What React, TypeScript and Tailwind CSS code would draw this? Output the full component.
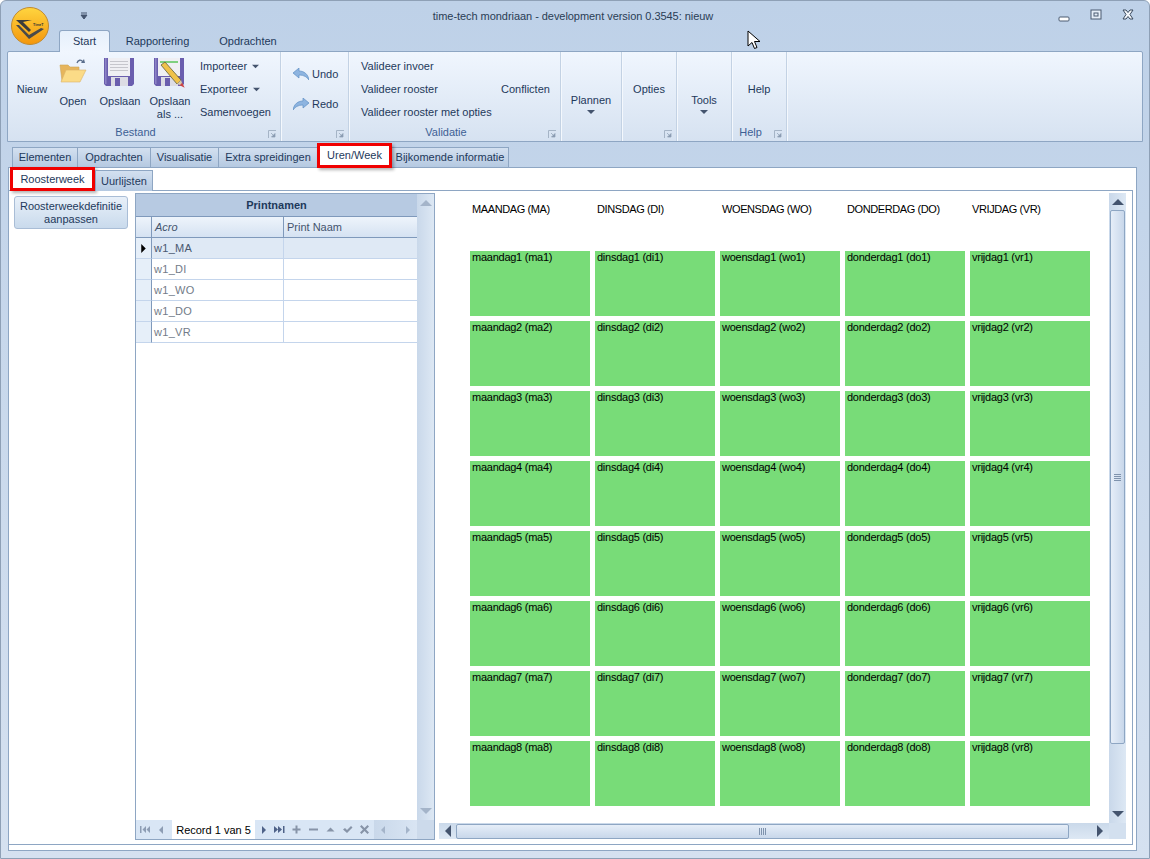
import type { ReactNode } from "react";

const font = "font-['Liberation_Sans',Arial,sans-serif]";
const days = [
  { name: "maandag", code: "ma", title: "MAANDAG (MA)" },
  { name: "dinsdag", code: "di", title: "DINSDAG (DI)" },
  { name: "woensdag", code: "wo", title: "WOENSDAG (WO)" },
  { name: "donderdag", code: "do", title: "DONDERDAG (DO)" },
  { name: "vrijdag", code: "vr", title: "VRIJDAG (VR)" },
];
const periods = [1, 2, 3, 4, 5, 6, 7, 8];
const acros = ["w1_MA", "w1_DI", "w1_WO", "w1_DO", "w1_VR"];

/* ── Icons ── */

function Logo() {
  return (
    <svg width="40" height="40" viewBox="0 0 40 40" className="absolute left-[9px] top-[5px]">
      <defs>
        <linearGradient id="orb" x1="0" y1="0" x2="0" y2="1">
          <stop offset="0" stopColor="#ffd53f" />
          <stop offset="1" stopColor="#f4960c" />
        </linearGradient>
      </defs>
      <circle cx="20" cy="20" r="18.5" fill="url(#orb)" stroke="#c08a30" strokeWidth="1" />
      <path d="M6 14h16l-9 2 8 8-2 2z" fill="#3c3c3c" />
      <path d="M6 19l13 14 15-10-3-1-12 7-10-10z" fill="#4a4a4a" />
      <text x="23" y="19.500" fontSize="3.600" fontWeight="700" fill="#333">TimeT</text>
    </svg>
  );
}

function Folder() {
  return (
    <svg width="28" height="26" viewBox="0 0 28 26">
      <path d="M18 6c1-3 4-4 6-1" stroke="#5b6f8c" strokeWidth="1.300" fill="none" />
      <path d="M22 6l4 0-1-4z" fill="#5b6f8c" />
      <path d="M1 8h8l2 2h9v14H3z" fill="#e6b55c" stroke="#cfa556" strokeWidth="0.600" />
      <path d="M7 13h20l-6 12H2z" fill="#fbdb87" stroke="#dcb468" strokeWidth="0.600" />
    </svg>
  );
}

function Floppy({ pencil }: { pencil?: boolean }) {
  return (
    <svg width="34" height="32" viewBox="0 0 34 32">
      <path d="M1 1h30v26l-2 2H3l-2-2z" fill="#6a5eae" />
      <rect x="2" y="1" width="1.500" height="26" fill="#8d83c6" />
      <rect x="5" y="1" width="22" height="18" fill="#efeff3" />
      {pencil ? (
        <path d="M7 4h18v2H7z" fill="#7fd07f" />
      ) : (
        <path d="M7 4.500h18M7 7.500h18M7 10.500h18M7 13.500h18" stroke="#c6c6cc" strokeWidth="1" />
      )}
      <rect x="8" y="20" width="17" height="9" fill="#dcdce4" />
      <rect x="12" y="21" width="5" height="8" fill="#6a5eae" />
      {pencil && (
        <>
          <path d="M8 8l4-3 16 18-4 4z" fill="#f0c24a" stroke="#5f5f3a" strokeWidth="0.800" />
          <path d="M24 27l4-4 2 6z" fill="#d8c8a8" />
          <path d="M28 28l2 1-1-2z" fill="#c44" stroke="#c44" strokeWidth="1.500" />
        </>
      )}
    </svg>
  );
}

function ArrowIcon({ flip }: { flip?: boolean }) {
  return (
    <svg width="16" height="13" viewBox="0 0 16 13" className={flip ? "-scale-x-100" : ""}>
      <path d="M0 5L6 0v3c5 0 9 3 10 9-2-3-5-5-10-5v3z" fill="#8db4e0" stroke="#5f8fc4" strokeWidth="0.700" />
    </svg>
  );
}

function Launcher() {
  return (
    <svg width="9" height="9" viewBox="0 0 9 9" className="absolute right-[3px] bottom-[2px]">
      <path d="M0.500 8V0.500H8" stroke="#a5b4c6" fill="none" />
      <path d="M3 3l3 3M7 3.500V7H3.500z" stroke="#8b9cb2" fill="#8b9cb2" strokeWidth="0.700" />
    </svg>
  );
}

function Tri({ dir, color = "#44546e", size = 8 }: { dir: "up" | "down" | "left" | "right"; color?: string; size?: number }) {
  const d = { up: "M0 6L4 2l4 4z", down: "M0 2l4 4 4-4z", left: "M6 0L2 4l4 4z", right: "M2 0l4 4-4 4z" }[dir];
  return (
    <svg width={size} height={size} viewBox="0 0 8 8" className="shrink-0">
      <path d={d} fill={color} />
    </svg>
  );
}

function NavGlyph({ d, color }: { d: string; color: string }) {
  return (
    <svg width="11" height="11" viewBox="0 0 11 11" className="shrink-0">
      <path d={d} fill={color} />
    </svg>
  );
}

function Cursor() {
  return (
    <svg width="14" height="20" viewBox="0 0 14 20" className="absolute left-[746px] top-[29px]">
      <path d="M1 1v15l4-3.500 2.500 6 2.500-1-2.500-6H13z" fill="#fff" stroke="#000" strokeWidth="1" />
    </svg>
  );
}

/* ── Ribbon ── */

function RibbonGroup({ width, label, launcher, children }: { width: string; label?: string; launcher?: boolean; children?: ReactNode }) {
  return (
    <div className={`${width} shrink-0 flex flex-col border-r border-[#c3d2e4] shadow-[1px_0_0_#f4f8fd] relative`}>
      <div className="h-[75px] flex">{children}</div>
      <div className="relative h-[15px] pr-[17px] text-center leading-[13px] text-[#3d5f95]">
        {label}
        {launcher && <Launcher />}
      </div>
    </div>
  );
}

function Stack({ children, className = "" }: { children: ReactNode; className?: string }) {
  return <div className={`flex flex-col pt-[3px] ${className}`}>{children}</div>;
}

function StackRow({ children }: { children: ReactNode }) {
  return <div className="h-[23px] flex items-center gap-[5px] whitespace-nowrap">{children}</div>;
}

function BigButton({ icon, label, width }: { icon: ReactNode; label: ReactNode; width: string }) {
  return (
    <div className={`${width} shrink-0 flex flex-col items-center text-center leading-[13px]`}>
      <div className="h-[43px] pt-[5px] flex items-start justify-center">{icon}</div>
      {label}
    </div>
  );
}

function Ribbon() {
  return (
    <div className="ml-[6px] h-[91px] w-[1136px] flex border border-[#8ea6c3] rounded-t-[2px] bg-linear-to-b from-[#f0f6fe] to-[#d6e2f1] text-[#1e395b]">
      <RibbonGroup width="w-[273px]" label="Bestand" launcher>
        <div className="w-[48px] shrink-0 flex items-center justify-center">Nieuw</div>
        <BigButton width="w-[34px]" icon={<Folder />} label="Open" />
        <BigButton width="w-[60px]" icon={<Floppy />} label="Opslaan" />
        <BigButton width="w-[40px]" icon={<Floppy pencil />} label={<span>Opslaan<br />als ...</span>} />
        <Stack className="pl-[10px]">
          <StackRow>Importeer <Tri dir="down" size={7} /></StackRow>
          <StackRow>Exporteer <Tri dir="down" size={7} /></StackRow>
          <StackRow>Samenvoegen</StackRow>
        </Stack>
      </RibbonGroup>
      <RibbonGroup width="w-[68px]" launcher>
        <div className="flex flex-col pl-[12px] pt-[15px] gap-[15px]">
          <div className="h-[15px] flex items-center gap-[3px]"><ArrowIcon />Undo</div>
          <div className="h-[15px] flex items-center gap-[3px]"><ArrowIcon flip />Redo</div>
        </div>
      </RibbonGroup>
      <RibbonGroup width="w-[212px]" label="Validatie" launcher>
        <Stack className="pl-[12px] w-[152px]">
          <StackRow>Valideer invoer</StackRow>
          <StackRow>Valideer rooster</StackRow>
          <StackRow>Valideer rooster met opties</StackRow>
        </Stack>
        <div className="flex items-center">Conflicten</div>
      </RibbonGroup>
      <RibbonGroup width="w-[61px]">
        <div className="w-full flex flex-col items-center pt-[42px] leading-[13px]">Plannen<span className="mt-[1px]"><Tri dir="down" /></span></div>
      </RibbonGroup>
      <RibbonGroup width="w-[55px]" launcher>
        <div className="w-full flex items-center justify-center">Opties</div>
      </RibbonGroup>
      <RibbonGroup width="w-[55px]">
        <div className="w-full flex flex-col items-center pt-[42px] leading-[13px]">Tools<span className="mt-[1px]"><Tri dir="down" /></span></div>
      </RibbonGroup>
      <RibbonGroup width="w-[55px]" label="Help" launcher>
        <div className="w-full flex items-center justify-center">Help</div>
      </RibbonGroup>
    </div>
  );
}

/* ── Tabs ── */

function DocTab({ label, width }: { label: string; width: string }) {
  return (
    <div className={`${width} h-[20px] shrink-0 flex items-center justify-center border border-b-0 border-[#8ea6c3] -ml-px first:ml-0 bg-linear-to-b from-[#d3e0f0] to-[#b5c9e1] text-[#1e395b]`}>
      {label}
    </div>
  );
}

function DocTabs() {
  return (
    <div className="mt-[1px] h-[24px] pl-[11px] flex items-end relative z-10">
      <DocTab label="Elementen" width="w-[66px]" />
      <DocTab label="Opdrachten" width="w-[74px]" />
      <DocTab label="Visualisatie" width="w-[69px]" />
      <DocTab label="Extra spreidingen" width="w-[100px]" />
      <div className="w-[75px] h-[25px] -mb-px -ml-px shrink-0 relative z-10 flex items-center justify-center border-[3px] border-[#f00000] bg-white text-[#1e395b] shadow-[2px_2px_3px_rgba(0,0,0,0.3)]">
        Uren/Week
      </div>
      <DocTab label="Bijkomende informatie" width="w-[118px]" />
    </div>
  );
}

function SubTabs() {
  return (
    <div className="h-[23px] pl-[1px] flex items-end relative z-10 -mb-px">
      <div className="w-[85px] h-[24px] shrink-0 flex items-center justify-center border-[3px] border-[#f00000] bg-white text-[#1e395b] shadow-[2px_2px_3px_rgba(0,0,0,0.3)]">
        Roosterweek
      </div>
      <div className="w-[58px] h-[21px] shrink-0 flex items-center justify-center border border-b-0 border-[#8ea6c3] bg-linear-to-b from-[#d3e0f0] to-[#b5c9e1] text-[#1e395b]">
        Uurlijsten
      </div>
    </div>
  );
}

/* ── Grid ── */

function NavBar() {
  return (
    <div className="h-[19px] flex bg-[#d9e6f5]">
      <div className="w-[36px] flex items-center pl-[3px] gap-[7px]">
        <NavGlyph color="#8d9db4" d="M1 2h1.500v7H1zM7 2v7L3.500 5.500zM11 2v7L7.500 5.500z" />
        <Tri dir="left" color="#8d9db4" />
      </div>
      <div className="w-[83px] pt-[1px] bg-white flex items-center justify-center text-black">Record 1 van 5</div>
      <div className="w-[119px] flex items-center pl-[5px] gap-[6px]">
        <Tri dir="right" color="#4f6288" />
        <NavGlyph color="#4f6288" d="M0 2l4 3.500L0 9zM4 2l4 3.500L4 9zM9 2h1.500v7H9z" />
        <NavGlyph color="#8794a8" d="M4.500 1.500h2v3h3v2h-3v3h-2v-3h-3v-2h3z" />
        <NavGlyph color="#8794a8" d="M1 4.500h9v2H1z" />
        <NavGlyph color="#8794a8" d="M1.500 7.500L5.500 3.500l4 4z" />
        <NavGlyph color="#8794a8" d="M1 5.500l2-1.500 2 2 4-4 1.500 1.500L5 9z" />
        <NavGlyph color="#8794a8" d="M1 2.500L2.500 1l3 3 3-3L10 2.500l-3 3 3 3L8.500 10l-3-3-3 3L1 8.500l3-3z" />
      </div>
      <div className="w-[43px] flex items-center justify-between px-[5px] bg-linear-to-r from-[#c9d8ea] to-[#d9e5f3]">
        <Tri dir="left" color="#a4b4c9" />
        <Tri dir="right" color="#a4b4c9" />
      </div>
      <div className="flex-1 bg-[#ccdaeb]" />
    </div>
  );
}

function Printnamen() {
  return (
    <div className="w-[300px] h-[647px] shrink-0 flex flex-col border border-[#8ea6c3] bg-white">
      <div className="flex-1 flex min-h-0">
        <div className="w-[281px] shrink-0 flex flex-col">
          <div className="h-[22px] flex items-center justify-center bg-[#b7cae2] font-bold text-[#1e395b]">Printnamen</div>
          <div className="h-[22px] flex border-y border-[#7f99bb] bg-linear-to-b from-[#eef4fb] to-[#d5e2f2] text-[#44546e]">
            <div className="w-[16px] shrink-0 border-r border-[#7f99bb]" />
            <div className="w-[132px] shrink-0 border-r border-[#7f99bb] pl-[3px] leading-[20px] italic">Acro</div>
            <div className="flex-1 pl-[3px] leading-[20px]">Print Naam</div>
          </div>
          {acros.map((a, i) => (
            <div key={a} className={`h-[21px] flex border-b border-[#c4d5ec] ${i === 0 ? "bg-[#dfe9f5]" : ""}`}>
              <div className="w-[16px] shrink-0 flex items-center justify-center border-r border-b -mb-px border-r-[#7f99bb] border-b-[#c4d5ec] bg-[#e6eff9]">
                {i === 0 && <Tri dir="right" color="#000" size={9} />}
              </div>
              <div className={`w-[132px] shrink-0 border-r border-[#c4d5ec] pl-[2px] leading-[20px] tracking-[0.3px] ${i === 0 ? "text-[#4a5870]" : "text-[#727b88]"}`}>{a}</div>
            </div>
          ))}
        </div>
        <div className="flex-1 flex flex-col items-center justify-between py-[3px] bg-linear-to-r from-[#c9d8ea] to-[#dde8f4]">
          <Tri dir="up" color="#a4b4c9" size={12} />
          <Tri dir="down" color="#a4b4c9" size={12} />
        </div>
      </div>
      <NavBar />
    </div>
  );
}

/* ── Schedule ── */

function Schedule() {
  return (
    <div className="w-[670px] flex-1 flex flex-col pl-[31px] bg-white text-black">
      <div className="h-[58px] flex pt-[9px] gap-[5px] tracking-[-0.4px]">
        {days.map((d) => (
          <div key={d.code} className="w-[120px] pl-[2px] leading-[14px]">{d.title}</div>
        ))}
      </div>
      <div className="grid grid-cols-[repeat(5,120px)] auto-rows-[65px] gap-[5px] tracking-[-0.25px]">
        {periods.map((p) =>
          days.map((d) => (
            <div key={d.code + p} className="bg-[#78dc78] pl-[2px] leading-[13px]">
              {`${d.name}${p} (${d.code}${p})`}
            </div>
          )),
        )}
      </div>
    </div>
  );
}

function ScrollArea() {
  return (
    <div className="ml-[4px] w-[687px] h-[647px] shrink-0 flex flex-col">
      <div className="h-[630px] flex">
        <Schedule />
        <div className="w-[17px] flex flex-col items-center bg-linear-to-r from-[#c9d8ea] to-[#dde8f4] py-[3px]">
          <Tri dir="up" size={12} />
          <div className="w-[15px] h-[534px] mt-[2px] flex items-center justify-center rounded-[2px] border border-[#8ea6c3] bg-linear-to-r from-[#e6eef8] to-[#c8d7ea]">
            <div className="w-[7px] h-[7px] bg-[repeating-linear-gradient(180deg,#7f93ad_0,#7f93ad_1px,transparent_1px,transparent_2px)]" />
          </div>
          <div className="flex-1" />
          <Tri dir="down" size={12} />
        </div>
      </div>
      <div className="h-[16px] flex items-center bg-linear-to-b from-[#cad9ea] to-[#dde8f4]">
        <div className="w-[17px] flex justify-center"><Tri dir="left" size={12} /></div>
        <div className="w-[613px] h-[15px] flex items-center justify-center rounded-[2px] border border-[#8ea6c3] bg-linear-to-b from-[#e6eef8] to-[#c8d7ea]">
          <div className="w-[7px] h-[7px] bg-[repeating-linear-gradient(90deg,#7f93ad_0,#7f93ad_1px,transparent_1px,transparent_2px)]" />
        </div>
        <div className="w-[40px] flex justify-end pr-[3px]"><Tri dir="right" size={12} /></div>
        <div className="w-[17px] h-full bg-[#d3e0ef]" />
      </div>
    </div>
  );
}

export default function App() {
  return (
    <div className={`${font} text-[11px] relative w-[1150px] h-[859px] overflow-hidden rounded-t-[6px] border border-[#8ea0b6] bg-linear-to-b from-[#bed1e8] to-[#d5e1f0]`}>
      <Logo />
      <Cursor />
      <div className="h-[30px] flex items-center pl-[79px] pr-[15px] text-[#2a3d55] relative">
        <svg width="8" height="8" viewBox="0 0 8 8"><path d="M1 1h6M1 3h6l-3 4z" stroke="#44546e" strokeWidth="1" fill="#44546e" /></svg>
        <div className="flex-1 text-center tracking-[-0.05px]">time-tech mondriaan - development version 0.3545: nieuw</div>
        <div className="flex items-center gap-[20px]">
          <svg width="12" height="12" viewBox="0 0 12 12"><rect x="1" y="7" width="10" height="4" rx="1" fill="#fff" stroke="#4a5a70" /></svg>
          <svg width="12" height="12" viewBox="0 0 12 12" className="-mt-[2px]"><rect x="1" y="1" width="10" height="9" fill="#e6eef8" stroke="#4a5a70" /><rect x="4" y="4" width="4" height="3" fill="none" stroke="#4a5a70" /></svg>
          <svg width="12" height="12" viewBox="0 0 12 12" className="-mt-[2px]"><path d="M1 1h3l2 2.500L8 1h3L8 5.500 11 10H8L6 7.500 4 10H1l3-4.500z" fill="#f4f7fb" stroke="#39485c" strokeWidth="1" /></svg>
        </div>
      </div>
      <div className="h-[21px] pl-[58px] flex items-end text-[#1e395b] relative z-10 -mb-px">
        <div className="w-[51px] h-[22px] flex items-center justify-center rounded-t-[3px] border border-b-0 border-[#8ea6c3] bg-linear-to-b from-[#e6f0fb] to-[#f0f6fe]">Start</div>
        <div className="w-[95px] h-[21px] flex items-center justify-center">Rapportering</div>
        <div className="w-[86px] h-[21px] flex items-center justify-center">Opdrachten</div>
      </div>
      <Ribbon />
      <DocTabs />
      <div className="ml-[7px] w-[1129px] h-[684px] flex flex-col border border-[#8ea6c3] bg-white">
        <SubTabs />
        <div className="w-[1124px] h-[655px] flex border border-l-0 border-[#8ea6c3] pt-[2px]">
          <div className="w-[126px] shrink-0 pl-[5px] pt-[3px]">
            <div className="w-[114px] h-[33px] flex items-center justify-center text-center leading-[13px] rounded-[3px] border border-[#a9bdd6] bg-linear-to-b from-[#e8f0f9] to-[#c9daec] text-[#1e395b]">
              Roosterweekdefinitie<br />aanpassen
            </div>
          </div>
          <Printnamen />
          <ScrollArea />
        </div>
      </div>
    </div>
  );
}
